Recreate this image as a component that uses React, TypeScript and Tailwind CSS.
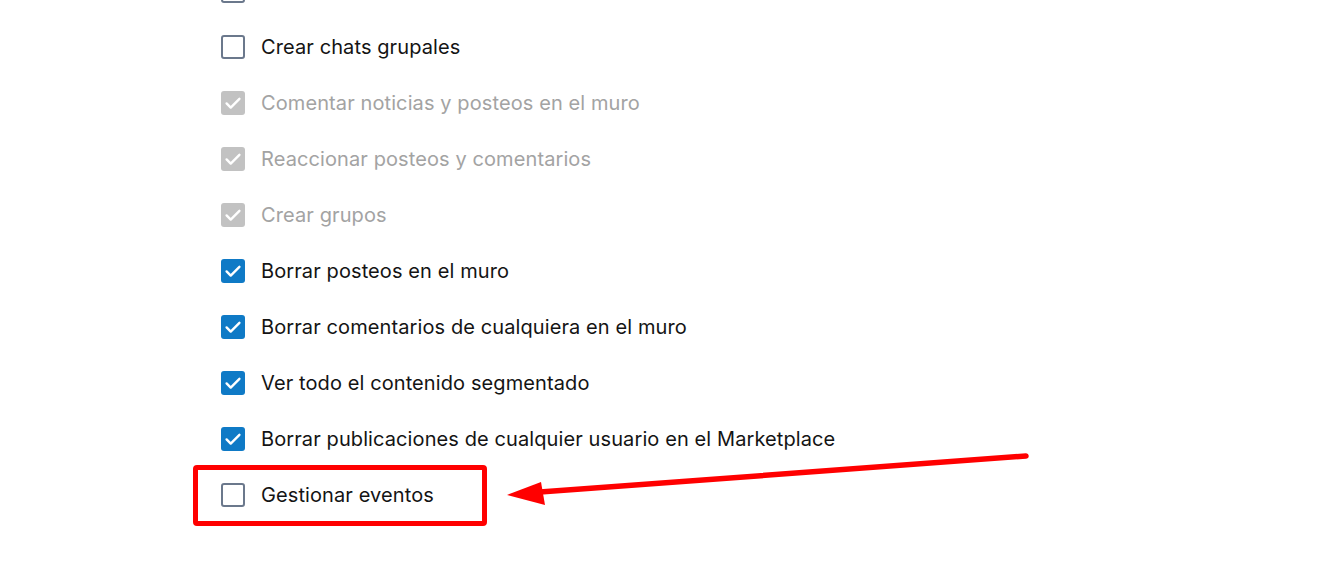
const ROWS = [
  { label: '', state: 'off' },
  { label: 'Crear chats grupales', state: 'off' },
  { label: 'Comentar noticias y posteos en el muro', state: 'disabled' },
  { label: 'Reaccionar posteos y comentarios', state: 'disabled' },
  { label: 'Crear grupos', state: 'disabled' },
  { label: 'Borrar posteos en el muro', state: 'on' },
  { label: 'Borrar comentarios de cualquiera en el muro', state: 'on' },
  { label: 'Ver todo el contenido segmentado', state: 'on' },
  { label: 'Borrar publicaciones de cualquier usuario en el Marketplace', state: 'on' },
  { label: 'Gestionar eventos', state: 'off' },
] as const;

function Check({ state }: { state: 'on' | 'off' | 'disabled' }) {
  if (state === 'off') {
    return <span className="block h-6 w-6 shrink-0 rounded-[3px] border-2 border-[#6b788c] bg-white" />;
  }
  return (
    <span
      className={`flex h-6 w-6 shrink-0 items-center justify-center rounded-[3px] ${
        state === 'on' ? 'bg-[#0f7ac6]' : 'bg-[#c2c2c2]'
      }`}
    >
      <svg viewBox="0 0 24 24" className="h-[22px] w-[22px]" fill="none" stroke="white" strokeWidth="2.6" strokeLinecap="round" strokeLinejoin="round">
        <path d="M5 12.5l4.5 4.5L19 7.5" />
      </svg>
    </span>
  );
}

export default function App() {
  return (
    <div className="relative h-[588px] w-[1342px] overflow-hidden bg-white font-['Inter','Noto_Sans',sans-serif]">
      <div className="-mt-[37px] pl-[221px]">
        {ROWS.map((r, i) => (
          <label key={i} className="flex h-[56px] items-center gap-4">
            <Check state={r.state} />
            <span
              className={`text-[20px] leading-none tracking-[0.1px] ${
                r.state === 'disabled' ? 'text-[#a3a3a3]' : 'text-[#141414]'
              }`}
            >
              {r.label}
            </span>
          </label>
        ))}
      </div>

      {/* annotation */}
      <div className="absolute left-[193px] top-[465px] h-[61px] w-[294px] rounded-[4px] border-[5px] border-[#ff0000]" />
      <svg className="absolute left-0 top-0" width="1342" height="588" viewBox="0 0 1342 588">
        <line x1="1026" y1="456" x2="540" y2="492" stroke="#ff0000" strokeWidth="5.5" strokeLinecap="round" />
        <polygon points="507,495 541,482 545,505" fill="#ff0000" />
      </svg>
    </div>
  );
}
